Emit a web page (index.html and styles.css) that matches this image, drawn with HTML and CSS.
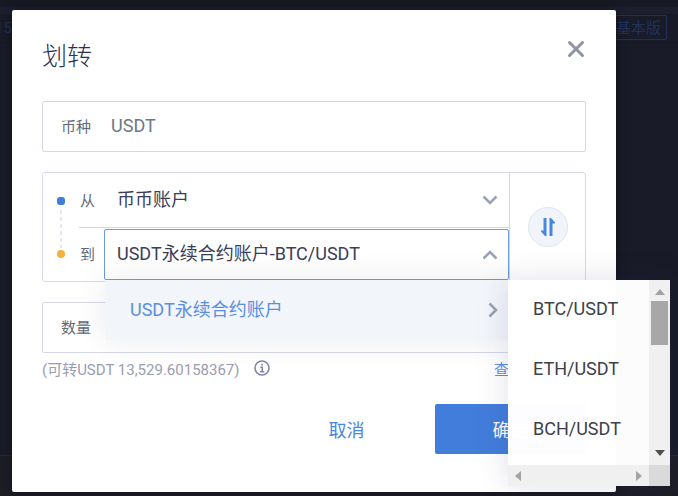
FILE: index.html
```html
<!doctype html>
<html lang="zh-CN">
<head>
	<meta charset="UTF-8">
	<title>划转</title>
	<link rel="stylesheet" href="styles.css">
</head>
<body>
	<div class="page">
		<div class="topbar"></div>
		<header class="header">
			<span class="price">15</span>
			<button class="version" type="button">基本版</button>
		</header>
		<div class="content"></div>
		<footer class="footer"></footer>
	</div>
	<div class="mask">
		<form class="modal">
			<div class="modal-head">
				<h1>划转</h1>
				<button class="close" type="button" aria-label="关闭">
					<svg width="18" height="18" viewBox="0 0 18 18"><path d="M2.5 2.5L15.5 15.5M15.5 2.5L2.5 15.5"/></svg>
				</button>
			</div>
			<div class="field">
				<label for="coin">币种</label>
				<input id="coin" type="text" value="USDT" readonly>
			</div>
			<div class="transfer">
				<div class="rail">
					<i class="dot from"></i>
					<i class="dash"></i>
					<i class="dot to"></i>
				</div>
				<div class="route">
					<div class="row">
						<label for="from">从</label>
						<div class="picker">
							<select id="from"><option>币币账户</option></select>
							<svg class="arrow" width="16" height="10" viewBox="0 0 16 10"><path d="M1.5 1.5L8 8L14.5 1.5"/></svg>
						</div>
					</div>
					<div class="row">
						<label for="to">到</label>
						<div class="picker open">
							<select id="to"><option>USDT永续合约账户-BTC/USDT</option></select>
							<svg class="arrow" width="16" height="10" viewBox="0 0 16 10"><path d="M1.5 8.5L8 2L14.5 8.5"/></svg>
							<!-- 一级菜单 -->
							<div class="menu">
								<button class="menu-item" type="button">USDT永续合约账户
									<svg width="10" height="16" viewBox="0 0 10 16"><path d="M1.5 1.5L8 8L1.5 14.5"/></svg>
								</button>
								<!-- 二级菜单 -->
								<div class="submenu">
									<ul>
										<li><button type="button">BTC/USDT</button></li>
										<li><button type="button">ETH/USDT</button></li>
										<li><button type="button">BCH/USDT</button></li>
									</ul>
									<div class="bar-y">
										<svg width="10" height="6" viewBox="0 0 10 6"><path fill="#a3a3a3" d="M0 6L5 0L10 6z"/></svg>
										<span class="thumb"></span>
										<svg width="10" height="6" viewBox="0 0 10 6"><path fill="#505050" d="M0 0L5 6L10 0z"/></svg>
									</div>
									<div class="bar-x">
										<svg width="6" height="10" viewBox="0 0 6 10"><path fill="#a3a3a3" d="M6 0L0 5L6 10z"/></svg>
										<svg width="6" height="10" viewBox="0 0 6 10"><path fill="#a3a3a3" d="M0 0L6 5L0 10z"/></svg>
									</div>
									<div class="corner"></div>
								</div>
							</div>
						</div>
					</div>
				</div>
				<div class="swap">
					<button type="button" aria-label="互换">
						<svg width="16" height="20" viewBox="0 0 16 20"><path d="M3.5 1H6.5V19H5L1 14.5V13.5H3.5zM9.5 19V1H11L15 5.5V6.5H12.5V19z"/></svg>
					</button>
				</div>
			</div>
			<div class="field">
				<label for="amount">数量</label>
				<input id="amount" type="text">
			</div>
			<div class="hint">
				<span>(可转USDT 13,529.60158367)</span>
				<svg width="16" height="16" viewBox="0 0 16 16"><circle cx="8" cy="8" r="7"/><path d="M8 3.8V5.4M6.3 7.3H8.3V11.6M6 11.7H10.3"/></svg>
				<a href="#">查看</a>
			</div>
			<div class="actions">
				<button class="cancel" type="button">取消</button>
				<button class="confirm" type="submit">确定</button>
			</div>
		</form>
	</div>
</body>
</html>
```

FILE: styles.css
```css
*{margin:0;padding:0;box-sizing:border-box;}
body{
	background-color:#191b28;
	font-family:Roboto,"Noto Sans CJK SC",sans-serif;
	font-size:18px;
	color:#3a3e58;
}
li{list-style:none;}
button,input,select{
	font:inherit;
	color:inherit;
	background:none;
	border:0;
	outline:none;
}
button{cursor:pointer;}
svg{
	fill:none;
	flex:none;
}

/* 背景页面 */
.page{
	display:flex;
	flex-direction:column;
	min-height:100vh;
}
.topbar{
	height:7px;
	background-color:#171a24;
}
.header{
	display:flex;
	justify-content:space-between;
	align-items:flex-end;
	height:36px;
	padding:0 11px 2px 0;
	border-top:7px solid #1d1f31;
	border-bottom:1px solid #161824;
	color:#20325c;
	font-size:15px;
}
.price{
	margin-left:-5px;
	line-height:24px;
}
.version{
	height:25px;
	padding:0 5px;
	border:1px solid #20325c;
	border-radius:2px;
	line-height:22px;
}
.content{flex:1;}
.footer{
	height:41px;
	border-top:1px solid #28272a;
	background-color:#1d1d26;
}

/* 弹窗 */
.mask{
	position:absolute;
	top:0;
	left:0;
	width:100%;
	padding:10px 62px 4px 12px;
}
.modal{
	padding:30px 30px 38px;
	border-radius:2px;
	background-color:#fff;
	box-shadow:0 0 12px rgba(0,0,0,.4);
}
.modal-head{
	display:flex;
	justify-content:space-between;
	margin-bottom:28px;
}
.modal-head h1{
	font-size:25px;
	font-weight:300;
	line-height:33px;
	color:#2c3052;
}
.close{
	display:flex;
	align-items:center;
	height:18px;
	margin-right:1px;
}
.close svg{
	stroke:#8f94a5;
	stroke-width:3;
	stroke-linecap:round;
}
.field{
	display:flex;
	align-items:center;
	height:51px;
	margin-top:20px;
	padding:0 18px 2px;
	border:1px solid #d6d7e6;
	border-radius:2px;
	color:#6b7886;
}
.field label,.row label{
	font-size:15px;
	color:#5f6b7a;
}
.field input{
	flex:1;
	min-width:0;
	margin-left:20px;
}

/* 划转方向 */
.transfer{
	display:flex;
	height:110px;
	margin-top:20px;
	border:1px solid #d6d9ee;
	border-radius:3px;
}
.rail{
	display:flex;
	flex-direction:column;
	align-items:center;
	width:36px;
	padding:24px 0 23px;
}
.dot{
	width:8px;
	height:8px;
	border-radius:50%;
}
.dot.from{
	border-radius:3px;
	background-color:#417cd9;
}
.dot.to{background-color:#f2b03d;}
.dash{
	flex:1;
	width:2px;
	margin:5px 0 2px;
	background:repeating-linear-gradient(#e3e8f0 0 4px,transparent 4px 7px);
}
.route{
	flex:1;
	min-width:0;
}
.row{
	display:flex;
	align-items:center;
	height:53px;
}
.row:first-child{
	height:55px;
	border-bottom:1px solid #d2d5e8;
}
.row label{
	width:25px;
	padding:0 0 2px 1px;
}
.picker{
	position:relative;
	display:flex;
	align-items:center;
	flex:1;
	height:51px;
	border:1px solid transparent;
	border-radius:2px;
}
.picker select{
	flex:1;
	min-width:0;
	height:100%;
	padding:0 12px 2px;
	appearance:none;
}
.picker.open{border-color:#6c9be3;}
.arrow{margin-right:10px;}
.arrow path,.menu-item path{
	stroke:#9aa3b5;
	stroke-width:2.6;
}
.swap{
	display:flex;
	align-items:center;
	justify-content:center;
	width:76px;
	border-left:1px solid #d2d5e8;
}
.swap button{
	display:flex;
	align-items:center;
	justify-content:center;
	width:40px;
	height:40px;
	border:1px solid #dfe5ec;
	border-radius:50%;
	background-color:#f1f5fb;
}
.swap path{fill:#4a86e0;}

/* 下拉菜单 */
.menu{
	position:absolute;
	top:calc(100% + 1px);
	left:0;
	width:100%;
	background-color:#f2f5fa;
	box-shadow:0 0 30px rgba(40,50,80,.1);
}
.menu-item{
	display:flex;
	align-items:center;
	justify-content:space-between;
	width:100%;
	height:60px;
	padding:0 10px 4px 25px;
	color:#5a8fe0;
}
.menu-item svg{margin-top:4px;}
.submenu{
	position:absolute;
	top:0;
	left:100%;
	display:grid;
	grid-template:185px 21px / 141px 21px;
	background-color:rgba(255,255,255,.99);
	box-shadow:0 0 30px rgba(40,50,100,.15);
}
.submenu ul{overflow:hidden;}
.submenu li button{
	width:100%;
	height:60px;
	padding:0 0 4px 25px;
	text-align:left;
	color:#3c4149;
}
.bar-y{
	display:flex;
	flex-direction:column;
	align-items:center;
	padding:9px 0;
	background-color:#f0f0f0;
}
.thumb{
	width:17px;
	height:44px;
	margin:6px 0 auto;
	background-color:#a7a7a7;
}
.bar-x{
	display:flex;
	align-items:center;
	justify-content:space-between;
	padding:0 7px;
	background-color:#f0f0f0;
}
.corner{background-color:#dadada;}

/* 提示和按钮 */
.hint{
	display:flex;
	align-items:center;
	height:30px;
	font-size:15px;
	color:#9a9db0;
}
.hint svg{
	margin-left:14px;
	stroke:#7f86a6;
	stroke-width:1.6;
}
.hint a{
	width:92px;
	margin-left:auto;
	color:#5a8fe0;
	text-decoration:none;
}
.actions{
	display:flex;
	justify-content:flex-end;
	gap:13px;
	margin-top:21px;
}
.actions button{
	width:151px;
	height:50px;
	border-radius:2px;
}
.cancel{color:#4a86e0;}
.confirm{
	background-color:#437ddb;
	color:#fff;
}
```
